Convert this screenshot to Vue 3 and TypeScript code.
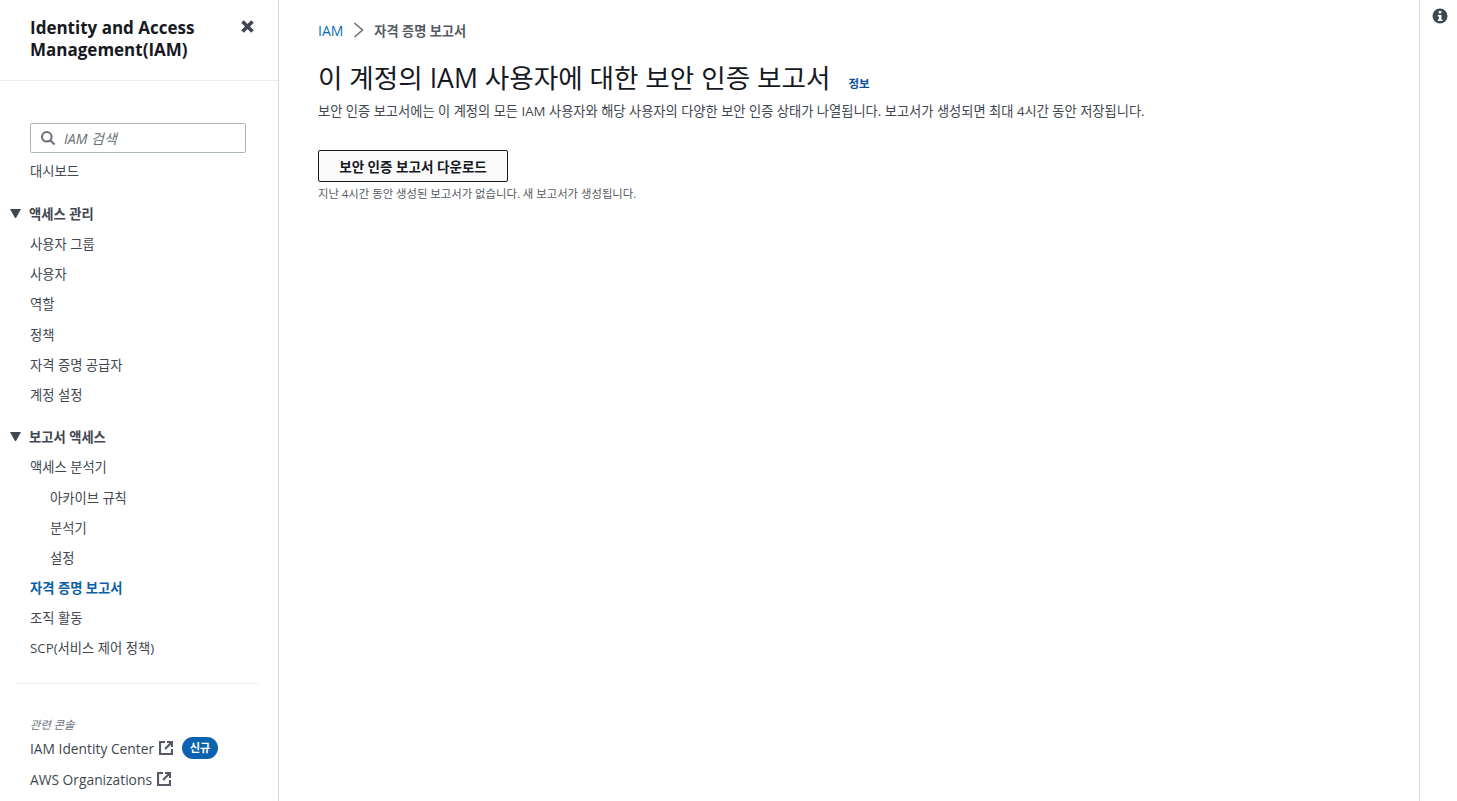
<script setup lang="ts">
interface NavItem { label: string; sub?: boolean; active?: boolean }
const top: NavItem[] = [{ label: '사용자 그룹' }, { label: '사용자' }, { label: '역할' }, { label: '정책' }, { label: '자격 증명 공급자' }, { label: '계정 설정' }]
const reports: NavItem[] = [
  { label: '액세스 분석기' },
  { label: '아카이브 규칙', sub: true },
  { label: '분석기', sub: true },
  { label: '설정', sub: true },
  { label: '자격 증명 보고서', active: true },
  { label: '조직 활동' },
  { label: 'SCP(서비스 제어 정책)' },
]
</script>

<template>
  <div class="page">
    <aside class="side">
      <header class="side-head">
        <h2>Identity and Access Management(IAM)</h2>
        <svg class="close" width="15" height="15" viewBox="0 0 15 15"><path d="M2.500 2.500l10 10M12.500 2.500l-10 10" stroke="#414750" stroke-width="3.600" /></svg>
      </header>
      <div class="side-body">
        <div class="search">
          <svg width="16" height="16" viewBox="0 0 16 16" fill="none" stroke="#687078" stroke-width="2"><circle cx="6.800" cy="6.800" r="4.800" /><path d="M10.300 10.300l4.200 4.200" /></svg>
          <span>IAM 검색</span>
        </div>
        <a class="item first">대시보드</a>
        <div class="section"><i class="tri"></i>액세스 관리</div>
        <a v-for="n in top" :key="n.label" class="item">{{ n.label }}</a>
        <div class="section second"><i class="tri"></i>보고서 액세스</div>
        <a v-for="n in reports" :key="n.label" class="item" :class="{ sub: n.sub, active: n.active }">{{ n.label }}</a>
        <hr />
        <div class="related">관련 콘솔</div>
        <a class="ext">IAM Identity Center
          <svg width="14" height="14" viewBox="0 0 14 14" fill="none" stroke="#545b64" stroke-width="2.200"><path d="M6 1H1v12h12V8M8 1h5v5M13 1L6 8" /></svg>
          <span class="badge">신규</span>
        </a>
        <a class="ext second-ext">AWS Organizations
          <svg width="14" height="14" viewBox="0 0 14 14" fill="none" stroke="#545b64" stroke-width="2.200"><path d="M6 1H1v12h12V8M8 1h5v5M13 1L6 8" /></svg>
        </a>
      </div>
    </aside>
    <main class="main">
      <nav class="crumbs">
        <a>IAM</a>
        <svg width="11" height="16" viewBox="0 0 11 16" fill="none" stroke="#687078" stroke-width="1.600"><path d="M1.500 1l8 7-8 7" /></svg>
        <span>자격 증명 보고서</span>
      </nav>
      <div class="title">
        <h1>이 계정의 IAM 사용자에 대한 보안 인증 보고서</h1>
        <a>정보</a>
      </div>
      <p class="desc">보안 인증 보고서에는 이 계정의 모든 IAM 사용자와 해당 사용자의 다양한 보안 인증 상태가 나열됩니다. 보고서가 생성되면 최대 4시간 동안 저장됩니다.</p>
      <button class="btn" type="button">보안 인증 보고서 다운로드</button>
      <p class="note">지난 4시간 동안 생성된 보고서가 없습니다. 새 보고서가 생성됩니다.</p>
    </main>
    <aside class="tools">
      <svg width="16" height="16" viewBox="0 0 16 16"><circle cx="8" cy="8" r="7.500" fill="#414750" /><rect x="6.800" y="3" width="2.600" height="2.400" fill="#fff" /><path d="M5.800 7h3.600v4.500h1.100V13H5.800v-1.500h1V8.400h-1z" fill="#fff" /></svg>
    </aside>
  </div>
</template>

<style>
html, body { margin: 0; background: #fff; overflow: hidden; }
</style>

<style scoped>
.page { display: flex; height: 801px; width: 1457px; overflow: hidden; font-family: "Open Sans", "Noto Sans CJK KR", sans-serif; color: #16191f; font-size: 13.3px; }
.side { width: 279px; box-sizing: border-box; flex: none; border-right: 1px solid #d5dbdb; }
.side-head { height: 81px; box-sizing: border-box; border-bottom: 1px solid #eaeded; padding: 17px 23px 0 30px; display: flex; justify-content: space-between; align-items: flex-start; }
.side-head h2 { margin: 0; font-size: 17px; line-height: 22px; font-weight: 700; width: 190px; }
.close { margin-top: 2px; }
.side-body { padding: 42px 0 0; }
.search { margin: 0 32px 0 30px; height: 30px; box-sizing: border-box; border: 1px solid #aab7b8; border-radius: 2px; display: flex; align-items: center; gap: 8px; padding-left: 9px; font-style: italic; color: #687078; font-size: 14px; }
.item { display: block; height: 30.170px; line-height: 30px; padding-left: 30px; color: #414750; white-space: nowrap; }
.item.first { margin-top: 3px; }
.item.sub { padding-left: 50px; }
.item.active { color: #0b5fa8; font-weight: 700; }
.section { display: flex; align-items: center; margin-top: 12px; height: 31px; font-weight: 700; color: #414750; }
.section.second { margin-top: 11px; height: 31.300px; }
.tri { height: 0; border-left: 5.500px solid transparent; border-right: 5.500px solid transparent; border-top: 9px solid #414750; margin: 0 8px 0 10px; flex: none; width: 1px; }
hr { margin: 19.700px 19px 0 17px; border: 0; border-top: 1px solid #eaeded; }
.related { margin: 33px 0 0 30px; font-size: 11.300px; line-height: 16px; font-style: italic; color: #687078; }
.ext { display: flex; align-items: center; gap: 5px; height: 22px; margin: 4px 0 0 30px; color: #414750; white-space: nowrap; font-size: 13.800px; }
.second-ext { margin-top: 9px; }
.badge { margin-left: 4px; width: 36px; height: 22px; border-radius: 11px; background: #0b63ad; color: #fff; font-size: 11.300px; font-weight: 700; text-align: center; line-height: 22px; }
.main { flex: 1; padding: 19px 0 0 39px; min-width: 0; }
.crumbs { display: flex; align-items: center; height: 22px; gap: 10px; font-size: 14px; }
.crumbs a { color: #0b6ab8; }
.crumbs span { color: #545b64; font-weight: 700; font-size: 13.200px; }
.title { display: flex; align-items: baseline; gap: 18px; margin-top: 17px; height: 40px; }
.title h1 { margin: 0; font-size: 26.600px; line-height: 40px; font-weight: 400; }
.title a { color: #0b4f9c; font-size: 11.500px; font-weight: 700; }
.desc { margin: 3px 0 0; line-height: 20px; font-size: 13.260px; color: #414750; white-space: nowrap; }
.btn { display: block; margin-top: 29px; width: 190px; height: 32px; background: #fafafa; border: 1px solid #16191f; border-radius: 2px; font: inherit; font-weight: 700; font-size: 13.550px; color: #16191f; padding: 0; }
.note { margin: 4px 0 0; font-size: 11.360px; line-height: 16px; color: #545b64; }
.tools { width: 38px; box-sizing: border-box; flex: none; border-left: 1px solid #d5dbdb; display: flex; justify-content: center; align-items: flex-start; padding-top: 8px; padding-left: 3px; }
</style>
